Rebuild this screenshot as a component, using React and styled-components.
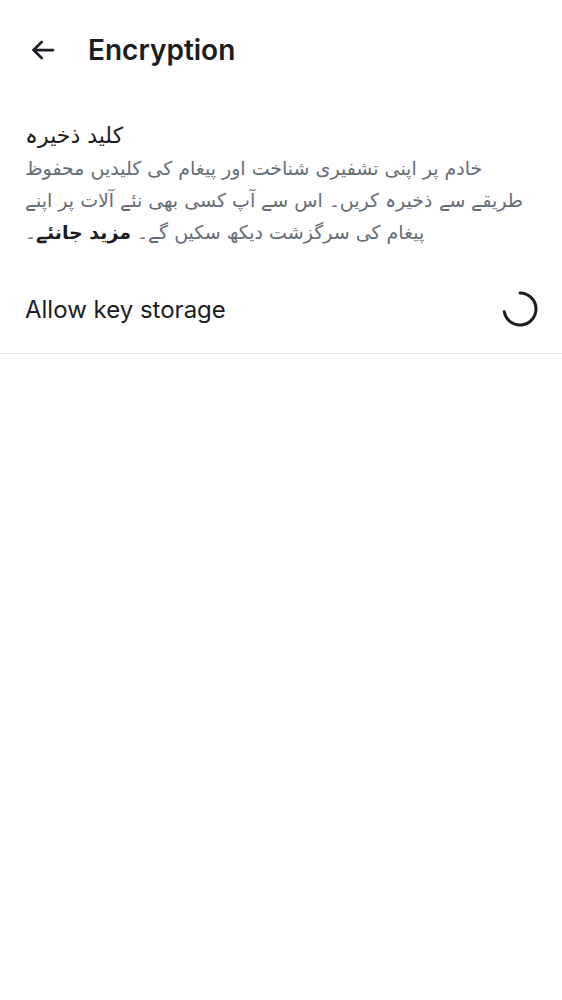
import React from "react";
import styled, { createGlobalStyle } from "styled-components";

const Global = createGlobalStyle`
  body {
    margin: 0;
    background: #fff;
    font-family: Inter, Roboto, "Noto Sans", "DejaVu Sans", sans-serif;
    color: #1b1d22;
  }
`;

const Page = styled.div`
  width: 562px;
  min-height: 1000px;
  background: #fff;
`;

const Header = styled.div`
  height: 100px;
  display: flex;
  align-items: center;
  padding: 0 0 0 26px;
  box-sizing: border-box;
`;

const BackButton = styled.button`
  width: 34px;
  height: 34px;
  display: flex;
  align-items: center;
  justify-content: center;
  border: none;
  background: none;
  padding: 0;
  color: #1b1d22;
  cursor: pointer;
`;

const Title = styled.h1`
  margin: 0 0 0 28px;
  font-size: 28px;
  font-weight: 600;
`;

const Section = styled.div`
  padding: 20px 25px 0 25px;
`;

const SectionTitle = styled.div`
  direction: rtl;
  text-align: left;
  font-family: "DejaVu Sans", "Noto Sans", sans-serif;
  font-size: 22px;
  line-height: 32px;
  color: #1b1d22;
`;

const Description = styled.p`
  direction: rtl;
  text-align: left;
  margin: 0;
  font-family: "DejaVu Sans", "Noto Sans", sans-serif;
  font-size: 19px;
  line-height: 32px;
  color: #656d77;
  width: 500px;
`;

const Bold = styled.b`
  color: #1b1d22;
  font-weight: 700;
`;

const Row = styled.div`
  height: 88px;
  margin-top: 17px;
  display: flex;
  align-items: center;
  justify-content: space-between;
  padding: 0 25px;
  border-bottom: 1px solid #e6e7e9;
`;

const RowLabel = styled.span`
  font-size: 24px;
  color: #1b1d22;
`;

const Spinner = styled.svg`
  width: 40px;
  height: 40px;
  margin-right: -3px;
`;

export default function App() {
  return (
    <Page>
      <Global />
      <Header>
        <BackButton aria-label="Back">
          <svg width="30" height="30" viewBox="0 0 24 24" fill="none" stroke="currentColor" strokeWidth="2.2" strokeLinecap="round" strokeLinejoin="round">
            <path d="M20 12H4.5" />
            <path d="M11 5.5L4.5 12L11 18.5" />
          </svg>
        </BackButton>
        <Title>Encryption</Title>
      </Header>
      <Section>
        <SectionTitle>کلید ذخیرہ</SectionTitle>
        <Description>
          خادم پر اپنی تشفیری شناخت اور پیغام کی کلیدیں محفوظ طریقے سے ذخیرہ کریں۔ اس سے آپ کسی بھی نئے آلات پر اپنے پیغام کی سرگزشت دیکھ سکیں گے۔ <Bold>مزید جانئے</Bold>۔
        </Description>
      </Section>
      <Row>
        <RowLabel>Allow key storage</RowLabel>
        <Spinner viewBox="0 0 40 40">
          <path d="M20 4 A16 16 0 1 1 4.24 22.78" fill="none" stroke="#1b1d22" strokeWidth="3" strokeLinecap="round" />
        </Spinner>
      </Row>
    </Page>
  );
}
